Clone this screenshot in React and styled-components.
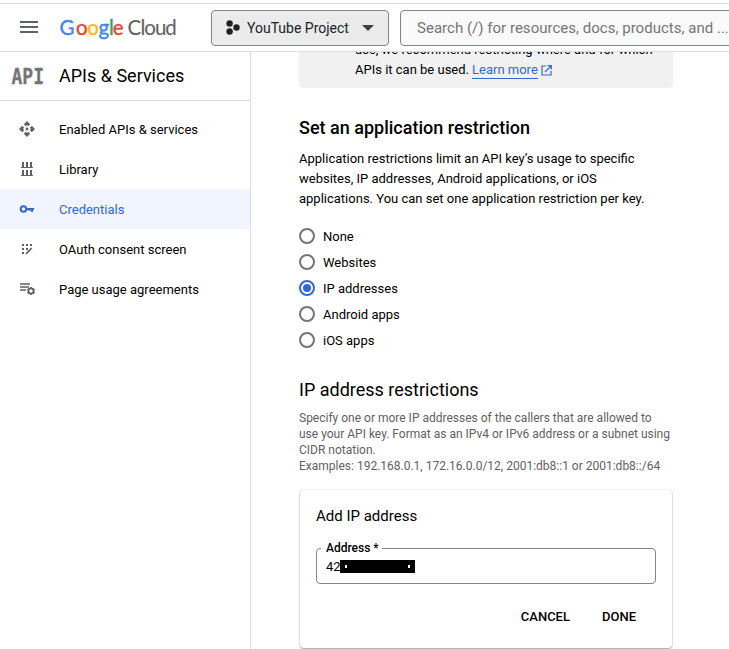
import React from 'react';
import styled, { createGlobalStyle } from 'styled-components';

const Global = createGlobalStyle`
  * { box-sizing: border-box; }
  html, body { margin: 0; height: 100%; overflow: hidden; background: #fff; }
  body { font-family: Roboto, "Liberation Sans", sans-serif; font-size: 13px; color: #000; }
  h1, h2, h3, p { margin: 0; }
  svg { display: block; flex: none; }
`;

const Page = styled.div`
  width: 729px;
  height: 649px;
  padding-top: 3px;
  display: flex;
  flex-direction: column;
  overflow: hidden;
`;
const TopBar = styled.header`
  height: 49px;
  flex: none;
  border-top: 1px solid #dadce0;
  border-bottom: 1px solid #dadce0;
  display: flex;
  align-items: center;
  padding-left: 17px;
`;
const MenuButton = styled.button`
  flex: none;
  border: 0;
  padding: 0;
  width: 24px;
  height: 24px;
  background: none;
`;
const Logo = styled.svg`
  margin-left: 17px;
  font-family: Lato, sans-serif;
  font-size: 20.5px;
`;
const ProjectPicker = styled.button`
  flex: none;
  width: 178px;
  height: 36px;
  margin-left: 31px;
  padding: 0 13px;
  display: flex;
  align-items: center;
  border: 1px solid #80868b;
  border-radius: 4px;
  background: #ebebeb;
  color: #202124;
  font: 400 14px Roboto, sans-serif;
  white-space: nowrap;
`;
const ProjectName = styled.span`
  margin-left: 6px;
  flex: 1;
  text-align: left;
`;
const SearchBox = styled.div`
  flex: none;
  width: 350px;
  height: 36px;
  margin-left: 11px;
  padding-left: 16px;
  display: flex;
  align-items: center;
  border: 1px solid #80868b;
  border-radius: 4px;
  background: #fafafa;
  color: #757575;
  font-size: 15px;
  letter-spacing: 0.02px;
  white-space: nowrap;
`;
const Body = styled.div`
  flex: 1;
  min-height: 0;
  display: flex;
`;
const Sidebar = styled.aside`
  width: 251px;
  flex: none;
  border-right: 1px solid #dadce0;
`;
const ProductHeader = styled.div`
  height: 49px;
  padding: 0 0 2px 11px;
  display: flex;
  align-items: center;
  border-bottom: 1px solid #dadce0;
`;
const ProductTitle = styled.h1`
  margin-left: 12px;
  font-size: 18px;
  font-weight: 400;
`;
const ApiMark = styled.svg`
  overflow: visible;
  font-family: "DejaVu Sans Mono", monospace;
  font-size: 21px;
  font-weight: 700;
`;
const Nav = styled.nav`
  padding-top: 8px;
`;
const NavItem = styled.a`
  height: 40px;
  padding-left: 19px;
  display: flex;
  align-items: center;
  gap: 24px;
  background: ${(p) => (p.$active ? '#f0f5ff' : 'transparent')};
  color: ${(p) => (p.$active ? '#3367d6' : '#000')};
  svg { color: ${(p) => (p.$active ? '#3367d6' : '#616161')}; }
`;
const Main = styled.main`
  padding-left: 48px;
  width: 422px;
  flex: none;
  overflow: hidden;
`;
const Notice = styled.div`
  margin-top: -20px;
  padding: 8px 0 0 56px;
  box-sizing: content-box;
  height: 48px;
  line-height: 20px;
  border-radius: 0 0 4px 4px;
  background: #f1f1f1;
  white-space: nowrap;
`;
const NoticeLine = styled.div`
  display: flex;
  align-items: center;
`;
const Link = styled.a`
  margin: 0 3px 0 3px;
  line-height: 16px;
  color: #3367d6;
  border-bottom: 1px solid #3367d6;
`;
const SectionTitle = styled.h2`
  margin-top: 28px;
  line-height: 24px;
  font-size: 18px;
  font-weight: 500;
`;
const Description = styled.p`
  margin-top: 9px;
  line-height: 20px;
  white-space: nowrap;
`;
const RadioGroup = styled.div`
  margin-top: 14px;
`;
const RadioRow = styled.label`
  height: 26px;
  display: flex;
  align-items: center;
  gap: 8px;
`;
const RadioMark = styled.span`
  width: 16px;
  height: 16px;
  display: grid;
  place-items: center;
  border: 2px solid ${(p) => (p.$checked ? '#3367d6' : '#757575')};
  border-radius: 50%;
  &::after {
    content: '';
    width: 8px;
    height: 8px;
    border-radius: 50%;
    background: ${(p) => (p.$checked ? '#3367d6' : 'transparent')};
  }
`;
const SubTitle = styled.h2`
  margin-top: 25px;
  line-height: 24px;
  font-size: 18px;
  font-weight: 400;
`;
const Hint = styled.p`
  margin-top: 8px;
  font-size: 12px;
  line-height: 16px;
  color: #616161;
  white-space: nowrap;
`;
const Card = styled.section`
  width: 372px;
  height: 158px;
  margin: 16px 0 0 1px;
  padding: 16px 16px 0;
  border-radius: 4px;
  box-shadow: 0 1px 2px rgba(0,0,0,.36), 0 0 2px rgba(0,0,0,.12);
`;
const CardTitle = styled.h3`
  line-height: 20px;
  font-size: 15px;
  font-weight: 400;
`;
const Field = styled.fieldset`
  width: 340px;
  height: 42px;
  margin: 16px 0 0;
  padding: 5px 9px 0;
  min-width: 0;
  border: 1px solid #80868b;
  border-radius: 4px;
`;
const FieldLabel = styled.legend`
  margin-left: -5px;
  padding: 0 3px 0 5px;
  font-size: 12px;
  font-weight: 500;
  line-height: 12px;
`;
const FieldValue = styled.div`
  display: flex;
  align-items: center;
  line-height: 16px;
`;
const Redaction = styled.span`
  width: 75px;
  height: 13px;
  margin: -1px 0 0 -1px;
  padding: 0 5px 0 5px;
  display: flex;
  align-items: center;
  justify-content: space-between;
  background: #000;
`;
const Dot = styled.span`
  width: 2px;
  height: 3px;
  background: #fff;
`;
const Actions = styled.div`
  margin-top: 24px;
  padding-right: 20px;
  display: flex;
  justify-content: flex-end;
  gap: 32px;
`;
const TextButton = styled.button`
  border: 0;
  padding: 0;
  background: none;
  color: #000;
  font: 500 13px/18px Roboto, sans-serif;
`;

const letters = [
  ['G', 59.4, '#4285f4'], ['o', 75.9, '#ea4335'], ['o', 87.2, '#fbbc04'], ['g', 98.6, '#4285f4'],
  ['l', 109, '#34a853'], ['e', 112.8, '#ea4335'],
  ['C', 127.4, '#5f6368'], ['l', 140.6, '#5f6368'], ['o', 144.2, '#5f6368'], ['u', 154.9, '#5f6368'], ['d', 165.3, '#5f6368'],
];

const icons = {
  apis: (
    <svg width="16" height="16" viewBox="0 0 16 16" fill="currentColor">
      <path d="M8 0l3.2 3.2-2 2L8 4 6.8 5.2l-2-2zM8 16l3.2-3.2-2-2L8 12l-1.2-1.2-2 2zM0 8l3.2-3.2 2 2L4 8l1.2 1.2-2 2zM16 8l-3.2-3.2-2 2L12 8l-1.2 1.2 2 2z" />
      <circle cx="8" cy="8" r="1.4" />
    </svg>
  ),
  library: (
    <svg width="16" height="16" viewBox="0 0 16 16" fill="currentColor">
      <path d="M3 1h2v5H3zM7 1h2v5H7zM11 1h2v5h-2zM2 6h12v1H2zM3 9h2v5H3zM7 9h2v5H7zM11 9h2v5h-2zM2 14h12v1H2z" />
    </svg>
  ),
  key: (
    <svg width="16" height="16" viewBox="0 0 16 16" fill="none" stroke="currentColor" strokeWidth="2">
      <circle cx="4.5" cy="8" r="2.8" />
      <path d="M7.5 8H15M13 8v3" />
      <path d="M10.5 8v2" strokeWidth="1.5" />
    </svg>
  ),
  consent: (
    <svg width="16" height="16" viewBox="0 0 16 16" fill="currentColor">
      <path d="M3 3h2v2H3zM7 3h2v2H7zM11 3h2v2h-2zM3 7h2v2H3zM7 7h2v2H7zM3 11h2v2H3z" />
      <path d="M7 12.8L12.800 7" stroke="currentColor" strokeWidth="1.7" />
    </svg>
  ),
  agreements: (
    <svg width="16" height="16" viewBox="0 0 16 16" fill="none" stroke="currentColor">
      <path d="M1 3h10M1 6h9M1 9h6" strokeWidth="1.5" />
      <circle cx="12" cy="10" r="2.6" strokeWidth="1.8" />
      <path d="M12 6v1.500M12 12.500V14M8.500 8l1.300.8M14.200 11.200l1.300.8M8.500 12l1.300-.8M14.200 8.800l1.300-.8" strokeWidth="1.8" />
    </svg>
  ),
};

const navItems = [
  ['apis', 'Enabled APIs & services'],
  ['library', 'Library'],
  ['key', 'Credentials'],
  ['consent', 'OAuth consent screen'],
  ['agreements', 'Page usage agreements'],
];
const restrictions = ['None', 'Websites', 'IP addresses', 'Android apps', 'iOS apps'];

export default function App() {
  return (
    <Page>
      <Global />
      <TopBar>
        <MenuButton aria-label="Menu">
          <svg width="24" height="24" fill="#5f6368">
            <path d="M3 5h18v2H3zM3 10h18v2H3zM3 15h18v2H3z" />
          </svg>
        </MenuButton>
        <Logo width="122" height="30" viewBox="58 13 122 30">
          {letters.map(([ch, x, color], i) => (
            <text key={i} x={x} y="34.6" fill={color} stroke={color} strokeWidth={i < 6 ? 0.4 : 0.1}>{ch}</text>
          ))}
        </Logo>
        <ProjectPicker>
          <svg width="16" height="16" fill="#202124">
            <circle cx="4.6" cy="3.5" r="3.2" />
            <circle cx="4.6" cy="11.5" r="3.2" />
            <circle cx="11.5" cy="7.5" r="3.2" />
          </svg>
          <ProjectName>YouTube Project</ProjectName>
          <svg width="14" height="8" fill="#3c4043"><path d="M1 1h12L7 7z" /></svg>
        </ProjectPicker>
        <SearchBox>Search (/) for resources, docs, products, and ...</SearchBox>
      </TopBar>
      <Body>
        <Sidebar>
          <ProductHeader>
            <ApiMark width="36" height="26" fill="#757575" stroke="#757575" strokeWidth="0.3">
              <text x="0.5" y="21.5" textLength="32.5" lengthAdjust="spacingAndGlyphs">API</text>
            </ApiMark>
            <ProductTitle>APIs &amp; Services</ProductTitle>
          </ProductHeader>
          <Nav>
            {navItems.map(([icon, label]) => (
              <NavItem key={icon} $active={icon === 'key'}>{icons[icon]}{label}</NavItem>
            ))}
          </Nav>
        </Sidebar>
        <Main>
          <Notice>
            <NoticeLine>use, we recommend restricting where and for which</NoticeLine>
            <NoticeLine>
              APIs it can be used.<Link>Learn more</Link>
              <svg width="11" height="11" viewBox="0 0 11 11" fill="none" stroke="#3367d6" strokeWidth="1.2">
                <path d="M5 1H1v9h9V6M6.500.700h3.800v3.800M10 1L4 7" />
              </svg>
            </NoticeLine>
          </Notice>
          <SectionTitle>Set an application restriction</SectionTitle>
          <Description>
            Application restrictions limit an API key’s usage to specific<br />
            websites, IP addresses, Android applications, or iOS<br />
            applications. You can set one application restriction per key.
          </Description>
          <RadioGroup>
            {restrictions.map((name) => (
              <RadioRow key={name}><RadioMark $checked={name === 'IP addresses'} />{name}</RadioRow>
            ))}
          </RadioGroup>
          <SubTitle>IP address restrictions</SubTitle>
          <Hint>
            Specify one or more IP addresses of the callers that are allowed to<br />
            use your API key. Format as an IPv4 or IPv6 address or a subnet using<br />
            CIDR notation.<br />
            Examples: 192.168.0.1, 172.16.0.0/12, 2001:db8::1 or 2001:db8::/64
          </Hint>
          <Card>
            <CardTitle>Add IP address</CardTitle>
            <Field>
              <FieldLabel>Address *</FieldLabel>
              <FieldValue>42<Redaction><Dot /><Dot /></Redaction></FieldValue>
            </Field>
            <Actions>
              <TextButton>CANCEL</TextButton>
              <TextButton>DONE</TextButton>
            </Actions>
          </Card>
        </Main>
      </Body>
    </Page>
  );
}
